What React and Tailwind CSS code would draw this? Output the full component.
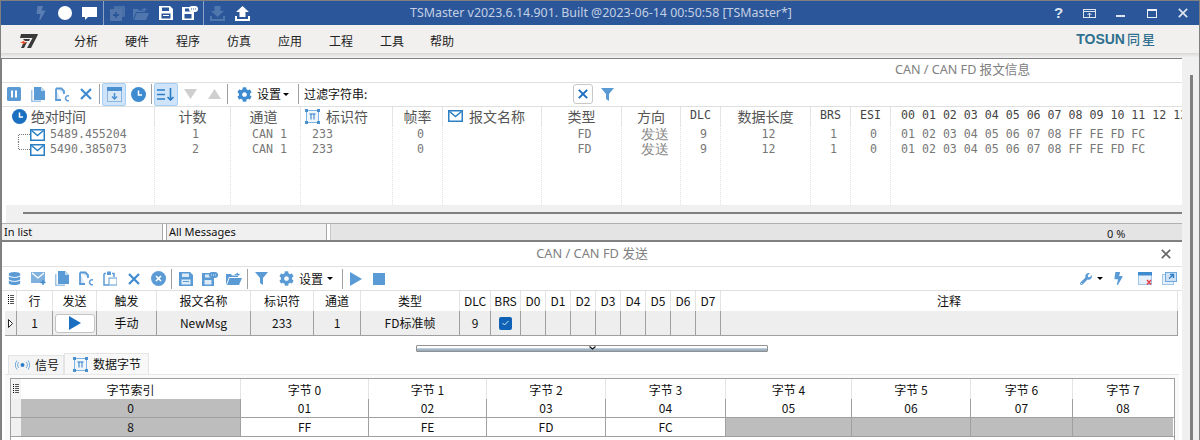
import { FaBolt, FaCog, FaDatabase, FaWrench } from 'react-icons/fa';

const Sep = () => <div className="w-[1px] h-[20px] bg-[#a0a0a0] mx-[1px]"></div>;

const Cell = ({ className = 'w-[24px]', children }) => (
  <div className={`flex items-center justify-center shrink-0 h-[23px] ${className}`}>{children}</div>
);

const BLUE = '#5b9bd5';

const Pause = () => (
  <svg width="14" height="14" viewBox="0 0 14 14">
    <rect width="14" height="14" rx="1.5" fill={BLUE} />
    <rect x="4" y="3.5" width="2" height="7" fill="#fff" />
    <rect x="8" y="3.5" width="2" height="7" fill="#fff" />
  </svg>
);

const Copy = () => (
  <svg width="14" height="15" viewBox="0 0 14 15">
    <path d="M0 3h1.5v10.5H10V15H0z" fill="#9fc5e8" />
    <path d="M3 0h7l4 4v9H3z" fill={BLUE} />
    <path d="M10 0l4 4h-4z" fill="#bcd7f0" />
  </svg>
);

const CopyC = () => (
  <svg width="15" height="15" viewBox="0 0 15 15">
    <path d="M1 1.5h5.5l2.5 2.5v3M1 1.5v11.500h5" fill="#dcebf8" stroke={BLUE} strokeWidth="1.800" />
    <path d="M14 9a2.500 2.500 0 1 0 0 4.600" fill="none" stroke={BLUE} strokeWidth="1.500" />
  </svg>
);

const Cross = ({ size = 12, color = '#3f8bd0', width = 2.2 }) => (
  <svg width={size} height={size} viewBox="0 0 12 12">
    <path d="M1 1l10 10M11 1L1 11" stroke={color} strokeWidth={width} fill="none" />
  </svg>
);

const Clock = ({ fill = BLUE }) => (
  <svg width="15" height="15" viewBox="0 0 15 15">
    <circle cx="7.500" cy="7.500" r="7.500" fill={fill} />
    <path d="M7.500 3.500v4.500h3.500" stroke="#fff" strokeWidth="1.500" fill="none" />
  </svg>
);

const CalDown = () => (
  <svg width="15" height="15" viewBox="0 0 15 15">
    <rect x="0.500" y="0.500" width="14" height="14" fill="#d7e7f6" stroke="#8ab6df" />
    <rect x="0" y="0" width="15" height="4" fill="#4a8fd0" />
    <path d="M7.500 6v6M5 9.500l2.500 2.500 2.500-2.500" stroke="#4a8fd0" strokeWidth="1.500" fill="none" />
  </svg>
);

const SortDown = () => (
  <svg width="18" height="13" viewBox="0 0 18 13">
    <path d="M0 2h8M0 6.500h8M0 11h8" stroke="#2b7cc7" strokeWidth="1.600" />
    <path d="M13.500 0v12M10.500 9l3 3 3-3" stroke="#2b7cc7" strokeWidth="1.600" fill="none" />
  </svg>
);

const Tri = ({ up }) => (
  <svg width="13" height="10" viewBox="0 0 13 10">
    <path d={up ? 'M6.500 0L13 10H0z' : 'M0 0h13L6.500 10z'} fill="#cfcfcf" />
  </svg>
);

const Filter = () => (
  <svg width="13" height="13" viewBox="0 0 13 13">
    <path d="M0 0h13L8 6v7L5 11V6z" fill={BLUE} />
  </svg>
);

const Caret = () => <div className="w-0 h-0 border-x-[3px] border-x-transparent border-t-[3px] border-t-black"></div>;

const Mail = ({ fill = '#2a7fc4' }) => (
  <svg width="15" height="12" viewBox="0 0 15 12">
    <rect x="0.750" y="0.750" width="13.500" height="10.500" fill="#fff" stroke={fill} strokeWidth="1.500" />
    <path d="M1.500 1.500l6 5 6-5" fill="none" stroke={fill} strokeWidth="1.500" />
  </svg>
);

const MailAdd = () => (
  <svg width="15" height="13" viewBox="0 0 15 13">
    <rect x="0" y="0" width="14" height="11" fill="#7fb0de" />
    <path d="M1 1l6 5 6-5" fill="none" stroke="#fff" strokeWidth="1.300" />
    <path d="M12 8v5M9.500 10.500h5" stroke="#3f8bd0" strokeWidth="1.400" />
  </svg>
);

const Pi = ({ size = 15 }) => (
  <svg width={size} height={size} viewBox="0 0 15 15">
    <rect x="1.500" y="1.500" width="12" height="12" fill="#eef5fb" stroke="#7fb2e0" />
    <rect x="0" y="0" width="3" height="3" fill="#4a8fd0" />
    <rect x="12" y="0" width="3" height="3" fill="#4a8fd0" />
    <rect x="0" y="12" width="3" height="3" fill="#4a8fd0" />
    <rect x="12" y="12" width="3" height="3" fill="#4a8fd0" />
    <path d="M4.500 5h6M6 5v5.500M9 5v5.500" stroke="#2b7cc7" strokeWidth="1" fill="none" />
  </svg>
);

const Save = ({ color = '#fff', bg = 'transparent' }) => (
  <svg width="14" height="14" viewBox="0 0 14 14">
    <path d="M0 0h11l3 3v11H0z" fill={color} />
    <rect x="3" y="1.500" width="7" height="3.500" fill={bg} />
    <rect x="2.500" y="7.500" width="9" height="5" fill={bg} />
    <rect x="4" y="9" width="6" height="1" fill={color} />
  </svg>
);

const SavePlus = ({ color = '#fff', bg = '#2b579a' }) => (
  <svg width="16" height="14" viewBox="0 0 16 14">
    <path d="M0 1h10l2 2v11H0z" fill={color} />
    <rect x="3" y="2.500" width="6" height="3" fill={bg} />
    <rect x="2.500" y="8" width="7" height="4.500" fill={bg} />
    <rect x="7" y="0" width="9" height="6" rx="3" fill={color} />
    <path d="M9 3h1M11 3h1M13 3h1" stroke={bg} strokeWidth="1" />
  </svg>
);

const FolderOpen = ({ color = '#fff', arrow = color }) => (
  <svg width="16" height="13" viewBox="0 0 16 13">
    <path d="M0 2h5l1 1.500h6V5H3L0 13z" fill={color} />
    <path d="M3.500 6H16l-3 7H1z" fill={color} />
    <path d="M8 3l4-2.500V2h3v-.500L12 4V3z" fill={arrow} />
  </svg>
);

const Tray = ({ up, color }) => (
  <svg width="15" height="15" viewBox="0 0 15 15">
    <path d="M0 10h2v3h11v-3h2v5H0z" fill={color} />
    <path d={up ? 'M7.500 0L14 6h-3.500v5h-6V6H1z' : 'M4.500 0h6v5H14l-6.500 6L1 5h3.500z'} fill={color} />
  </svg>
);

const PlusStack = () => (
  <svg width="15" height="15" viewBox="0 0 15 15">
    <rect x="4" y="0" width="11" height="11" rx="1" fill="#4a70a8" />
    <rect x="0" y="3" width="12" height="12" rx="1" fill="#5275ab" />
    <path d="M6 6v6M3 9h6" stroke="#2b579a" strokeWidth="1.800" />
  </svg>
);

const Chat = () => (
  <svg width="15" height="13" viewBox="0 0 15 13">
    <path d="M0 0h15v10H6l-3 3v-3H0z" fill="#fff" />
  </svg>
);

const Play = ({ color = BLUE, w = 12, h = 14 }) => (
  <svg width={w} height={h} viewBox="0 0 12 14">
    <path d="M0 0l12 7-12 7z" fill={color} />
  </svg>
);

const RowHeaderIcon = () => (
  <svg width="6" height="9" viewBox="0 0 6 9">
    <path d="M0 .5h1M0 2.500h1M0 4.500h1M0 6.500h1M0 8.500h1" stroke="#000" />
    <path d="M2 .5h4M2 2.500h4M2 4.500h4M2 6.500h4M2 8.500h4" stroke="#555" />
  </svg>
);

const menus = [
  { label: '分析', width: 'w-[51px]' },
  { label: '硬件', width: 'w-[51px]' },
  { label: '程序', width: 'w-[51px]' },
  { label: '仿真', width: 'w-[51px]' },
  { label: '应用', width: 'w-[51px]' },
  { label: '工程', width: 'w-[51px]' },
  { label: '工具', width: 'w-[50px]' },
  { label: '帮助', width: 'w-[51px]' },
];

const TitleBar = () => (
  <div className="flex items-center h-[24px] bg-[#2b579a] text-[#c4cfe2] shrink-0">
    <div className="flex items-center w-[409px] shrink-0">
      <div className="w-[28px]"></div>
      <Cell><FaBolt size={14} color="#5a7eb3" /></Cell>
      <Cell><div className="w-[14px] h-[14px] rounded-full bg-white"></div></Cell>
      <Cell><Chat /></Cell>
      <div className="w-[1px] h-[24px] bg-[#8aa2c6] ml-[2px]"></div>
      <Cell className="w-[24px] ml-[1px]"><PlusStack /></Cell>
      <Cell><FolderOpen color="#4f76ad" /></Cell>
      <Cell className="w-[25px]"><Save color="#fff" bg="#2b579a" /></Cell>
      <Cell><SavePlus /></Cell>
      <div className="w-[1px] h-[24px] bg-[#8aa2c6] ml-[1px]"></div>
      <Cell className="w-[26px]"><Tray color="#4f76ad" /></Cell>
      <Cell><Tray up color="#fff" /></Cell>
    </div>
    <div className="text-[12.400px] whitespace-nowrap font-['Noto_Sans',sans-serif]">
      TSMaster v2023.6.14.901. Built @2023-06-14 00:50:58 [TSMaster*]
    </div>
    <div className="ml-auto flex items-center">
      <Cell className="w-[31px]"><span className="text-[15px] font-bold text-[#dfe5ef] font-['Liberation_Sans',sans-serif]">?</span></Cell>
      <Cell className="w-[31px]">
        <svg width="13" height="9" viewBox="0 0 13 9"><rect x="0.500" y="0.500" width="12" height="8" fill="none" stroke="#dfe5ef" /><path d="M0 2.500h13M6.500 8V4M4.500 6l2-2 2 2" stroke="#dfe5ef" fill="none" /></svg>
      </Cell>
      <Cell className="w-[31px]"><div className="w-[9px] h-[2px] mt-[6px] bg-[#dfe5ef]"></div></Cell>
      <Cell className="w-[31px]"><div className="w-[10px] h-[9px] border border-t-2 border-[#eef1f6]"></div></Cell>
      <Cell className="w-[32px]"><Cross size={10} color="#dfe5ef" width={2} /></Cell>
    </div>
  </div>
);

const MenuBar = () => (
  <div className="flex items-center h-[28px] bg-[#f1f0ee] shrink-0 pr-[42px] pt-[4px]">
    <div className="w-[73px] pl-[18px]">
      <svg width="19" height="14" viewBox="0 0 19 14" className="block">
        <path d="M2 0h17l-1 2.500L12 14H8l5.500-10H1z" fill="#3a3a3a" />
        <path d="M4 5h7l-1 2H6zM8 8l-3 6H2l3-6z" fill="#3a3a3a" />
        <path d="M1 9l5-3-1 2h3L3 11l1-2z" fill="#e8542a" />
      </svg>
    </div>
    {menus.map((m) => (
      <div key={m.label} className={`text-[12px] text-[#222] ${m.width}`}>{m.label}</div>
    ))}
    <div className="ml-auto flex items-center text-[#2f6f8f] font-bold leading-none pb-[5px]">
      <span className="text-[14px] font-['Liberation_Sans',sans-serif]">TOSUN</span>
      <span className="text-[13px] ml-[2px] tracking-[2px] font-medium">同星</span>
    </div>
  </div>
);

const ToolbarOne = () => (
  <div className="flex items-center h-[24px] border-b border-[#e0e0e0] pb-[1px]">
    <Cell><Pause /></Cell>
    <Cell><Copy /></Cell>
    <Cell><CopyC /></Cell>
    <Cell><Cross /></Cell>
    <Sep />
    <div className="w-[24px] h-[23px] flex items-center justify-center bg-[#cfe4f8] border border-[#a6cff3] rounded-[2px] ml-[1px]"><CalDown /></div>
    <Cell><Clock fill="#3f8bd0" /></Cell>
    <Sep />
    <div className="w-[24px] h-[23px] flex items-center justify-center bg-[#cfe4f8] border border-[#a6cff3] rounded-[2px] ml-[1px]"><SortDown /></div>
    <Cell><Tri /></Cell>
    <Cell><Tri up /></Cell>
    <Sep />
    <Cell className="w-[25px] ml-[3px]"><FaCog size={15} color="#3f8bd0" /></Cell>
    <span className="text-[12px] text-[#111] w-[26px] shrink-0">设置</span>
    <Caret />
    <div className="ml-[8px]"><Sep /></div>
    <span className="text-[12px] text-[#111] ml-[4px] w-[269px] shrink-0">过滤字符串:</span>
    <div className="w-[20px] h-[20px] flex items-center justify-center bg-white border border-[#c8c8c8] rounded-[3px]"><Cross size={10} color="#1f6fc0" width={2.400} /></div>
    <div className="ml-[8px]"><Filter /></div>
  </div>
);

const headerCn = 'text-[14px] text-[#555]';
const mono = "font-['DejaVu_Sans_Mono',monospace] text-[11.600px] text-[#777]";
const monoHead = "font-['DejaVu_Sans_Mono',monospace] text-[11.600px] text-[#444]";

const hexText = '01 02 03 04 05 06 07 08 FF FE FD FC';

const TimeCell = ({ first, value }) => (
  <div className="flex items-center h-[15px] pl-[15px]">
    <svg width="12" height="15" viewBox="0 0 12 15" className="shrink-0">
      <path d={first ? 'M0.500 15V7.500H12' : 'M0.500 0V7.500H12'} fill="none" stroke="#777" strokeDasharray="1 1" />
    </svg>
    <Mail />
    <span className={`${mono} ml-[5px]`}>{value}</span>
  </div>
);

const columns = [
  {
    width: 'w-[152px]',
    first: true,
    head: (
      <div className="flex items-center pl-[9px]">
        <Clock fill="#1a6fc0" />
        <span className={`${headerCn} ml-[4px] tracking-[-0.300px]`}>绝对时间</span>
      </div>
    ),
    cells: [<TimeCell first value="5489.455204" />, <TimeCell value="5490.385073" />],
  },
  { width: 'w-[76px]', head: <div className={`${headerCn} text-center`}>计数</div>, cells: ['1', '2'], align: 'text-center pl-[6px]' },
  { width: 'w-[70px]', head: <div className={`${headerCn} text-center pr-[4px]`}>通道</div>, cells: ['CAN 1', 'CAN 1'], align: 'pl-[21px]' },
  {
    width: 'w-[92px]',
    head: (
      <div className="flex items-center pl-[4px]">
        <Pi />
        <span className={`${headerCn} ml-[6px]`}>标识符</span>
      </div>
    ),
    cells: ['233', '233'],
    align: 'pl-[11px]',
  },
  { width: 'w-[50px]', head: <div className={`${headerCn} text-center`}>帧率</div>, cells: ['0', '0'], align: 'text-center pl-[6px]' },
  {
    width: 'w-[99px]',
    head: (
      <div className="flex items-center pl-[5px]">
        <Mail />
        <span className={`${headerCn} ml-[6px]`}>报文名称</span>
      </div>
    ),
    cells: ['', ''],
  },
  { width: 'w-[80px]', head: <div className={`${headerCn} text-center`}>类型</div>, cells: ['FD', 'FD'], align: 'text-center pl-[6px]' },
  {
    width: 'w-[59px]',
    head: <div className={`${headerCn} text-center`}>方向</div>,
    cells: [<div className="text-[14px] text-[#888] leading-[15px] text-center pl-[7px]">发送</div>, <div className="text-[14px] text-[#888] leading-[15px] text-center pl-[7px]">发送</div>],
  },
  { width: 'w-[40px]', head: <div className={`${monoHead} text-center`}>DLC</div>, cells: ['9', '9'], align: 'text-center pl-[6px]' },
  { width: 'w-[90px]', head: <div className={`${headerCn} text-center`}>数据长度</div>, cells: ['12', '12'], align: 'text-center pl-[6px]' },
  { width: 'w-[40px]', head: <div className={`${monoHead} text-center`}>BRS</div>, cells: ['1', '1'], align: 'text-center pl-[6px]' },
  { width: 'w-[40px]', head: <div className={`${monoHead} text-center`}>ESI</div>, cells: ['0', '0'], align: 'text-center pl-[6px]' },
  {
    width: 'flex-1 min-w-0',
    head: <div className={`${monoHead} pl-[10px] whitespace-nowrap`}>00 01 02 03 04 05 06 07 08 09 10 11 12 13 14</div>,
    cells: [hexText, hexText],
    align: 'pl-[10px] whitespace-nowrap',
  },
];

const MessageTable = () => (
  <div className="flex h-[98px] overflow-hidden">
    {columns.map((col, i) => (
      <div key={i} className={`flex flex-col shrink-0 ${col.width}`}>
        <div className={`h-[19px] pb-[1px] flex flex-col justify-center leading-none border-l ${col.first ? 'border-transparent' : 'border-[#e4e4e4]'}`}>{col.head}</div>
        <div className={`flex-1 pt-[1px] border-l border-dotted ${col.first ? 'border-transparent' : 'border-[#e0e0e0]'}`}>
          {col.cells.map((c, j) => (
            <div key={j} className={`h-[15px] leading-[15px] ${mono} ${col.align || ''}`}>{c}</div>
          ))}
        </div>
      </div>
    ))}
  </div>
);

const StatusBar = () => (
  <div className="flex h-[17px] border-t border-[#b0b0b0] text-[11px] text-[#111] font-['Noto_Sans',sans-serif] gap-[3px]">
    <div className="w-[161px] bg-[#f0f0f0] border-r border-[#a8a8a8] pl-[2px] leading-[15px]">In list</div>
    <div className="w-[161px] bg-[#f0f0f0] border-x border-[#a8a8a8] pl-[2px] leading-[15px]">All Messages</div>
    <div className="flex-1 bg-[#e4e4e4] border-l border-[#c8c8c8] leading-[20px] pl-[776px] text-[#222]">0 %</div>
  </div>
);

const sendCols = [
  { w: 'w-[36px]', head: '行', val: '1' },
  { w: 'w-[44px]', head: '发送', val: 'btn' },
  { w: 'w-[60px]', head: '触发', val: '手动' },
  { w: 'w-[94px]', head: '报文名称', val: 'NewMsg' },
  { w: 'w-[63px]', head: '标识符', val: '233' },
  { w: 'w-[47px]', head: '通道', val: '1' },
  { w: 'w-[99px]', head: '类型', val: 'FD标准帧' },
  { w: 'w-[31px]', head: 'DLC', val: '9' },
  { w: 'w-[30px]', head: 'BRS', val: 'check' },
  { w: 'w-[25px]', head: 'D0', val: '' },
  { w: 'w-[25px]', head: 'D1', val: '' },
  { w: 'w-[25px]', head: 'D2', val: '' },
  { w: 'w-[25px]', head: 'D3', val: '' },
  { w: 'w-[25px]', head: 'D4', val: '' },
  { w: 'w-[25px]', head: 'D5', val: '' },
  { w: 'w-[25px]', head: 'D6', val: '' },
  { w: 'w-[25px]', head: 'D7', val: '' },
  { w: 'flex-1', head: '注释', val: '' },
];

const ToolbarTwo = () => (
  <div className="flex items-center h-[24px] border-b border-[#e0e0e0]">
    <Cell><FaDatabase size={13} color={BLUE} /></Cell>
    <Cell><MailAdd /></Cell>
    <Cell><Copy /></Cell>
    <Cell><CopyC /></Cell>
    <Cell>
      <svg width="14" height="15" viewBox="0 0 14 15"><path d="M1 2.500h2M9 2.500h2V6M1 2.500V14h5" fill="none" stroke={BLUE} strokeWidth="1.500" /><rect x="4" y="0.500" width="4" height="3.500" fill={BLUE} /><rect x="6" y="7" width="8" height="7" fill="none" stroke={BLUE} /></svg>
    </Cell>
    <Cell><Cross /></Cell>
    <Cell>
      <svg width="15" height="15" viewBox="0 0 15 15"><circle cx="7.500" cy="7.500" r="7.500" fill={BLUE} /><path d="M5 5l5 5M10 5l-5 5" stroke="#fff" strokeWidth="1.600" /></svg>
    </Cell>
    <Sep />
    <Cell className="w-[25px]"><Save color={BLUE} bg="#dcebf8" /></Cell>
    <Cell><SavePlus color={BLUE} bg="#dcebf8" /></Cell>
    <Cell><FolderOpen color={BLUE} /></Cell>
    <Sep />
    <Cell className="w-[25px]"><Filter /></Cell>
    <Cell className="w-[24px]"><FaCog size={15} color={BLUE} /></Cell>
    <span className="text-[12px] text-[#111] w-[29px] shrink-0 pl-[1px]">设置</span>
    <Caret />
    <div className="ml-[8px]"><Sep /></div>
    <Cell className="w-[24px]"><Play /></Cell>
    <Cell className="w-[22px]"><div className="w-[12px] h-[12px] bg-[#5b9bd5]"></div></Cell>
    <div className="ml-auto flex items-center pr-[1px]">
      <Cell className="w-[23px]"><FaWrench size={12} color={BLUE} /></Cell>
      <Caret />
      <Cell className="w-[30px]"><FaBolt size={13} color={BLUE} /></Cell>
      <Cell>
        <svg width="15" height="13" viewBox="0 0 15 13"><rect x="0.500" y="0.500" width="13" height="12" fill="#e6f0fa" stroke="#9fc5e8" /><rect x="0" y="0" width="14" height="3.500" fill="#3f8bd0" /><path d="M9 8l4 4.500M13 8l-4 4.500" stroke="#e2434b" strokeWidth="1.500" /></svg>
      </Cell>
      <Cell>
        <svg width="15" height="13" viewBox="0 0 15 13"><rect x="0.500" y="2.500" width="11" height="10" fill="#e6f0fa" stroke="#9fc5e8" /><rect x="3.500" y="0.500" width="11" height="9" fill="#cfe2f5" stroke="#6ea8dc" /><path d="M7 6.500l3.500-3M8 2.500h3.500V6" stroke="#2b7cc7" fill="none" strokeWidth="1.400" /></svg>
      </Cell>
    </div>
  </div>
);

const SendTable = () => (
  <div className="pl-[3px] pr-[4px]">
    <div className="flex h-[20px] text-[12px] text-[#111]">
      <div className="w-[11px] flex items-center justify-center shrink-0 pb-[4px]"><RowHeaderIcon /></div>
      {sendCols.map((c) => (
        <div key={c.head} className={`${c.w} shrink-0 text-center leading-[20px] border-l border-[#e4e4e4] ${c.head === '注释' ? 'border-r' : ''}`}>{c.head}</div>
      ))}
    </div>
    <div className="flex h-[25px] bg-[#eeeeee] border-b border-[#a0a0a0] text-[12px] text-[#111]">
      <div className="w-[11px] flex items-center justify-center shrink-0">
        <svg width="5" height="9" viewBox="0 0 5 9"><path d="M0.500 0.500l4 4-4 4z" fill="#fff" stroke="#222" /></svg>
      </div>
      {sendCols.map((c) => (
        <div key={c.head} className={`${c.w} shrink-0 flex items-center justify-center border-l border-[#a0a0a0] ${c.head === '注释' ? 'border-r' : ''}`}>
          {c.val === 'btn' && (
            <div className="w-[40px] h-[19px] bg-white border border-[#c4c4c4] rounded-[3px] flex items-center justify-center"><Play color="#1a6fc0" /></div>
          )}
          {c.val === 'check' && (
            <div className="w-[13px] h-[13px] bg-[#0f62b5] rounded-[2px] flex items-center justify-center">
              <svg width="7" height="6" viewBox="0 0 7 6"><path d="M0.500 3l2 2 4-4" fill="none" stroke="#dbe8f5" /></svg>
            </div>
          )}
          {c.val !== 'btn' && c.val !== 'check' && c.val}
        </div>
      ))}
    </div>
  </div>
);

const Splitter = () => (
  <div className="flex justify-center pt-[9px] pb-[1px]">
    <div className="w-[352px] h-[7px] border border-[#909090] rounded-[1px] bg-[linear-gradient(#ffffff_0%,#ffffff_30%,#a4b8c8_60%,#94aabb_100%)] flex justify-center">
      <svg width="7" height="4" viewBox="0 0 7 4"><path d="M0.500 0.500l3 2.500 3-2.500" fill="none" stroke="#111" strokeWidth="1.200" /></svg>
    </div>
  </div>
);

const Tabs = () => (
  <div className="flex items-end h-[21px] pl-[6px] text-[12px] text-[#111]">
    <div className="flex items-center w-[56px] h-[19px] bg-[#f4f4f4] border border-b-0 border-[#e4e4e4] pl-[6px] gap-[5px] shrink-0">
      <svg width="15" height="10" viewBox="0 0 15 10">
        <circle cx="7.500" cy="5" r="2" fill="#2b7cc7" />
        <path d="M4 2a4 4 0 0 0 0 6M11 2a4 4 0 0 1 0 6M2 0.500a7 7 0 0 0 0 9M13 0.500a7 7 0 0 1 0 9" stroke="#6ea8dc" fill="none" />
      </svg>
      <span>信号</span>
    </div>
    <div className="flex items-center w-[85px] h-[21px] bg-[#f8f8f8] border border-b-0 border-[#e4e4e4] pl-[8px] gap-[5px] shrink-0">
      <Pi />
      <span>数据字节</span>
    </div>
  </div>
);

const byteCols = ['w-[219px]', 'w-[128px]', 'w-[118px]', 'w-[119px]', 'w-[120px]', 'w-[126px]', 'w-[119px]', 'w-[102px]', 'w-[101px]'];

const byteHead = ['字节索引', '字节 0', '字节 1', '字节 2', '字节 3', '字节 4', '字节 5', '字节 6', '字节 7'];
const byteRows = [
  ['0', '01', '02', '03', '04', '05', '06', '07', '08'],
  ['8', 'FF', 'FE', 'FD', 'FC', '', '', '', ''],
];

const ByteTable = () => (
  <div className="flex-1 border-t border-[#e8e8e8] ml-[3px] mr-[3px] pl-[5px] pr-[4px] pt-[3px] bg-[#fafafa]">
    <div className="h-full bg-white border-l border-t border-r border-[#a0a0a0] text-[12px] text-[#111]">
      <div className="flex h-[20px]">
        <div className="w-[10px] shrink-0 bg-[#f4f4f4] flex justify-center pt-[5px]"><RowHeaderIcon /></div>
        {byteHead.map((h, i) => (
          <div key={h} className={`${byteCols[i]} shrink-0 text-center leading-[21px] ${i ? 'border-l border-[#e4e4e4]' : ''}`}>{h}</div>
        ))}
      </div>
      {byteRows.map((row) => (
        <div key={row[0]} className="flex h-[19px] border-b border-[#a0a0a0]">
          <div className="w-[10px] shrink-0 bg-[#f0f0f0]"></div>
          {row.map((v, i) => (
            <div key={i} className={`${byteCols[i]} shrink-0 text-center leading-[18px] ${i ? 'border-l border-[#a0a0a0]' : ''} ${i === 0 || v === '' ? 'bg-[#bdbdbd]' : 'bg-white'}`}>{v}</div>
          ))}
        </div>
      ))}
    </div>
  </div>
);

const PanelTitle = ({ children, className = '' }) => (
  <div className={`flex items-center border-b border-[#e0e0e0] text-[#808080] font-['Noto_Sans','Noto_Sans_CJK_SC',sans-serif] ${className}`}>{children}</div>
);

export default function App() {
  return (
    <div className="flex flex-col w-[1200px] h-[440px] overflow-hidden bg-[#f0f0f0] border-x border-t border-[#808080] font-['Noto_Sans_CJK_SC','Noto_Sans',sans-serif]">
      <TitleBar />
      <MenuBar />
      <div className="h-[5px] bg-[linear-gradient(#d8d8d8,#f4f4f4)] shrink-0"></div>
      <div className="flex flex-1 min-h-0">
        <div className="w-[1181px] shrink-0 flex flex-col bg-white border-l border-t border-[#808080]">
          <PanelTitle className="h-[24px] justify-end pr-[152px] text-[12.600px]">CAN / CAN FD 报文信息</PanelTitle>
          <ToolbarOne />
          <MessageTable />
          <div className="h-[18px] bg-[#f0f0f0] ml-[4px] pl-[17px] pt-[7px]">
            <div className="h-[2px] bg-[#808080]"></div>
          </div>
          <StatusBar />
          <div className="flex flex-col flex-1 min-h-0 border-t-2 border-[#808080]">
            <PanelTitle className="h-[25px] relative justify-center text-[12.800px]">
              CAN / CAN FD 发送
              <div className="absolute right-[11px] top-[7px]"><Cross size={10} color="#666" width={2} /></div>
            </PanelTitle>
            <ToolbarTwo />
            <SendTable />
            <Splitter />
            <Tabs />
            <ByteTable />
          </div>
        </div>
        <div className="flex flex-1 bg-[#f0f0f0]">
          <div className="w-[8px]"></div>
          <div className="w-[3px] bg-[#808080] mt-[17px]"></div>
        </div>
      </div>
    </div>
  );
}
